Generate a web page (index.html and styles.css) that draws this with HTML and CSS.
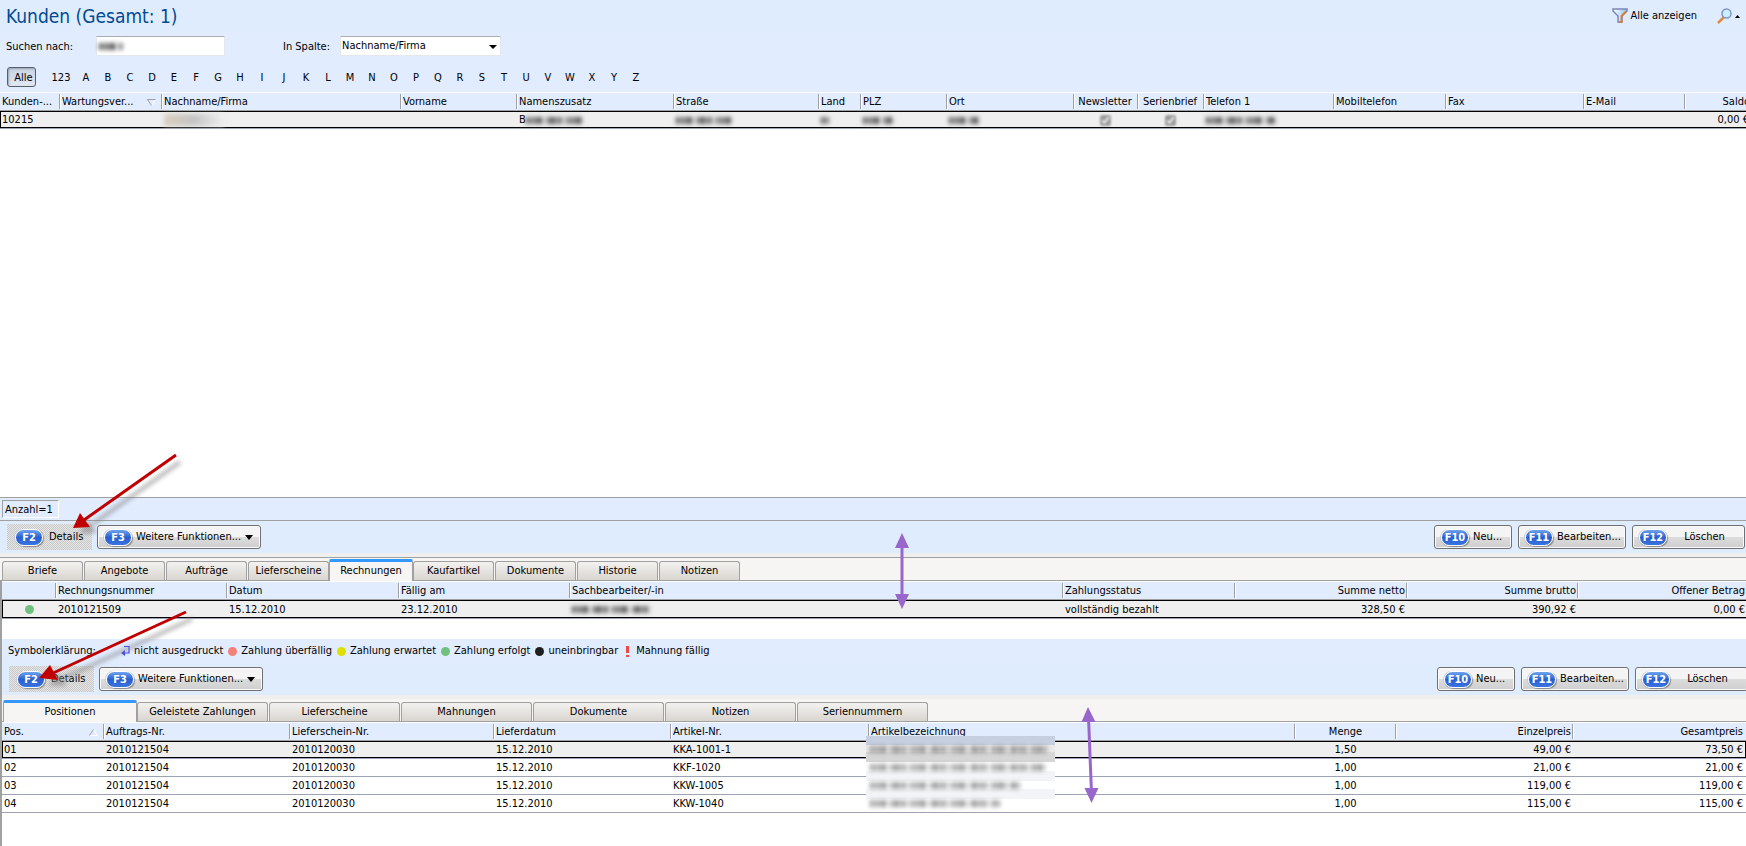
FILE: index.html
```html
<!DOCTYPE html>
<html lang="de">
<head>
<meta charset="utf-8">
<title>Kunden</title>
<link rel="stylesheet" href="styles.css">
</head>
<body>
<header class="titlebar">
  <h1>Kunden (Gesamt: 1)</h1>
  <button class="link-btn" type="button">
    <svg width="16" height="15" viewBox="0 0 16 15"><defs><linearGradient id="fg" x1="0" x2="1"><stop offset="0" stop-color="#fff"/><stop offset="1" stop-color="#8cc4ee"/></linearGradient></defs><path d="M1 1h14v2l-5 5v6H6V8L1 3z" fill="url(#fg)" stroke="#7c86b8" stroke-width="1.5"/><path d="M14 3.500 9.500 8v6H7" fill="none" stroke="#e07a28" stroke-width="1.800"/></svg>
    Alle anzeigen</button>
  <button class="link-btn find" type="button" aria-label="Suche">
    <svg width="24" height="16" viewBox="0 0 24 16"><path d="m1 15 6-6" stroke="#e08a3c" stroke-width="2.500"/><circle cx="9.500" cy="5.500" r="4.500" fill="#c9f0fc" stroke="#8295c8" stroke-width="1.500"/><path d="M18 10h5l-2.500-3z"/></svg>
  </button>
</header>

<section class="search">
  <form class="search-row">
    <label class="l-search" for="q">Suchen nach:</label>
    <span class="field"><input id="q" type="text"><i class="smudge s-q"></i></span>
    <label class="l-col" for="col">In Spalte:</label>
    <span class="combo"><select id="col"><option>Nachname/Firma</option></select><svg width="8" height="4" viewBox="0 0 8 4"><path d="M0 0h8L4 4z"/></svg></span>
  </form>
  <nav class="alpha">
    <button class="all" type="button">Alle</button><button class="num" type="button">123</button><button type="button">A</button><button type="button">B</button><button type="button">C</button><button type="button">D</button><button type="button">E</button><button type="button">F</button><button type="button">G</button><button type="button">H</button><button type="button">I</button><button type="button">J</button><button type="button">K</button><button type="button">L</button><button type="button">M</button><button type="button">N</button><button type="button">O</button><button type="button">P</button><button type="button">Q</button><button type="button">R</button><button type="button">S</button><button type="button">T</button><button type="button">U</button><button type="button">V</button><button type="button">W</button><button type="button">X</button><button type="button">Y</button><button type="button">Z</button>
  </nav>
</section>

<main class="customers">
  <table class="grid wide">
    <colgroup><col class="w61"><col class="w102"><col><col class="w116"><col class="w157"><col class="w145"><col class="w42"><col class="w86"><col class="w127"><col class="w64"><col class="w66"><col class="w130"><col class="w112"><col class="w138"><col class="w101"><col class="w64"></colgroup>
    <thead><tr><th>Kunden-...</th><th><span class="sort">Wartungsver...<svg width="9" height="7" viewBox="0 0 9 7"><path d="M8.500.500 4.500 6.500" stroke="#fff"/><path d="M8.500.500h-8l4 6" fill="none" stroke="#a0a0a0"/></svg></span></th><th>Nachname/Firma</th><th>Vorname</th><th>Namenszusatz</th><th>Straße</th><th>Land</th><th>PLZ</th><th>Ort</th><th class="c">Newsletter</th><th class="c">Serienbrief</th><th>Telefon 1</th><th>Mobiltelefon</th><th>Fax</th><th>E-Mail</th><th class="r">Saldo</th></tr></thead>
    <tbody><tr class="sel"><td>10215</td><td></td><td><i class="smudge s-name"></i></td><td></td><td>B<i class="smudge w60"></i></td><td><i class="smudge w55"></i></td><td><i class="smudge w8"></i></td><td><i class="smudge w30"></i></td><td><i class="smudge w30"></i></td><td class="c"><input class="soft" type="checkbox" checked aria-label="Newsletter"></td><td class="c"><input class="soft" type="checkbox" checked aria-label="Serienbrief"></td><td><i class="smudge w70"></i></td><td></td><td></td><td></td><td class="r">0,00 €</td></tr></tbody>
  </table>
</main>

<div class="status"><span>Anzahl=1</span></div>

<div class="toolbar">
  <button class="btn on" type="button"><b class="key">F2</b>Details</button>
  <button class="btn more" type="button"><b class="key">F3</b>Weitere Funktionen...<svg width="8" height="5" viewBox="0 0 8 5"><path d="M0 0h8L4 5z"/></svg></button>
  <span class="grow"></span>
  <button class="btn new" type="button"><b class="key">F10</b>Neu...</button>
  <button class="btn edit" type="button"><b class="key">F11</b>Bearbeiten...</button>
  <button class="btn del" type="button"><b class="key">F12</b><span>Löschen</span></button>
  <svg class="mark red-1" width="130" height="90" viewBox="0 0 130 90"><g class="shade"><path d="M113 10 26 72" stroke="#888" stroke-width="4"/><path d="m12 82 9-15 9 14z" fill="#888"/></g><path d="M109 3 17 68" stroke="#c00000" stroke-width="3"/><path d="m6 76 7-15 10 14z" fill="#c00000"/></svg>
  <svg class="mark violet-1" width="14" height="76" viewBox="0 0 14 76"><path d="M7 10v56" stroke="#9966cc" stroke-width="3"/><path d="m7 0 7 15H0zM7 76l7-15H0z" fill="#9966cc"/></svg>
</div>
<div class="strip"></div>

<section class="detail">
  <div class="tabs ruled">
    <button type="button">Briefe</button><button type="button">Angebote</button><button type="button">Aufträge</button><button type="button">Lieferscheine</button><button class="active" type="button">Rechnungen</button><button type="button">Kaufartikel</button><button type="button">Dokumente</button><button type="button">Historie</button><button type="button">Notizen</button>
  </div>
  <table class="grid lined wide-2">
    <colgroup><col class="w55"><col class="w171"><col class="w172"><col class="w171"><col><col class="w172"><col class="w172"><col class="w171"><col class="w169"></colgroup>
    <thead><tr><th></th><th>Rechnungsnummer</th><th>Datum</th><th>Fällig am</th><th>Sachbearbeiter/-in</th><th>Zahlungsstatus</th><th class="r">Summe netto</th><th class="r">Summe brutto</th><th class="r">Offener Betrag</th></tr></thead>
    <tbody><tr class="sel"><td class="c"><i class="dot green"></i></td><td>2010121509</td><td>15.12.2010</td><td>23.12.2010</td><td><i class="smudge w80"></i></td><td>vollständig bezahlt</td><td class="r">328,50 €</td><td class="r">390,92 €</td><td class="r">0,00 €</td></tr></tbody>
  </table>

  <div class="legend">
    <span class="l-title">Symbolerklärung:</span>
    <span class="item"><svg width="9" height="10" viewBox="0 0 9 10"><path d="M3 .500h5V7H3" fill="none" stroke="#4040f0" stroke-width="1.200"/><path d="M0 7l4-3v6z" fill="#4040f0"/></svg>nicht ausgedruckt</span>
    <span class="item"><i class="dot red"></i>Zahlung überfällig</span>
    <span class="item"><i class="dot yellow"></i>Zahlung erwartet</span>
    <span class="item"><i class="dot green"></i>Zahlung erfolgt</span>
    <span class="item"><i class="dot black"></i>uneinbringbar</span>
    <span class="item"><svg width="9" height="11" viewBox="0 0 9 11"><path d="M3 0h3v7H3zM3 9h3v2H3z" fill="#f04848"/></svg>Mahnung fällig</span>
  </div>

  <div class="toolbar inner">
    <button class="btn on" type="button"><b class="key">F2</b>Details</button>
    <button class="btn more" type="button"><b class="key">F3</b>Weitere Funktionen...<svg width="8" height="5" viewBox="0 0 8 5"><path d="M0 0h8L4 5z"/></svg></button>
    <span class="grow"></span>
    <button class="btn new" type="button"><b class="key">F10</b>Neu...</button>
    <button class="btn edit" type="button"><b class="key">F11</b>Bearbeiten...</button>
    <button class="btn del" type="button"><b class="key">F12</b><span>Löschen</span></button>
    <svg class="mark red-2" width="170" height="84" viewBox="0 0 170 84"><g class="shade"><path d="m157 10-128 59" stroke="#888" stroke-width="4"/><path d="m13 77 11-13 8 13z" fill="#888"/></g><path d="M151 3 16 65" stroke="#c00000" stroke-width="3"/><path d="m4 69 11-13 8 15z" fill="#c00000"/></svg>
  </div>
  <div class="strip"></div>

  <div class="tabs big">
    <button class="active" type="button">Positionen</button><button type="button">Geleistete Zahlungen</button><button type="button">Lieferscheine</button><button type="button">Mahnungen</button><button type="button">Dokumente</button><button type="button">Notizen</button><button type="button">Seriennummern</button>
    <svg class="mark violet-2" width="18" height="96" viewBox="0 0 18 96"><path d="m7.500 10 3 76" stroke="#9966cc" stroke-width="3"/><path d="m7 0 7.500 15H.500zM10.500 96l7-15h-14z" fill="#9966cc"/></svg>
  </div>
  <table class="grid lined items">
    <colgroup><col class="w103"><col class="w186"><col class="w204"><col class="w177"><col class="w198"><col><col class="w101"><col class="w177"><col class="w172"></colgroup>
    <thead><tr><th><span class="sort">Pos.<svg width="9" height="7" viewBox="0 0 9 7"><path d="M4.500.500l4 6h-8" fill="none" stroke="#fff"/><path d="m.500 6.500 4-6" stroke="#a0a0a0"/></svg></span></th><th>Auftrags-Nr.</th><th>Lieferschein-Nr.</th><th>Lieferdatum</th><th>Artikel-Nr.</th><th class="host">Artikelbezeichnung<span class="veil"><i class="smudge w180"></i><i class="smudge w175"></i><i class="smudge w150"></i><i class="smudge w130"></i></span></th><th class="c">Menge</th><th class="r">Einzelpreis</th><th class="r">Gesamtpreis</th></tr></thead>
    <tbody>
      <tr class="sel"><td>01</td><td>2010121504</td><td>2010120030</td><td>15.12.2010</td><td>KKA-1001-1</td><td></td><td class="c">1,50</td><td class="r">49,00 €</td><td class="r">73,50 €</td></tr>
      <tr><td>02</td><td>2010121504</td><td>2010120030</td><td>15.12.2010</td><td>KKF-1020</td><td></td><td class="c">1,00</td><td class="r">21,00 €</td><td class="r">21,00 €</td></tr>
      <tr><td>03</td><td>2010121504</td><td>2010120030</td><td>15.12.2010</td><td>KKW-1005</td><td></td><td class="c">1,00</td><td class="r">119,00 €</td><td class="r">119,00 €</td></tr>
      <tr><td>04</td><td>2010121504</td><td>2010120030</td><td>15.12.2010</td><td>KKW-1040</td><td></td><td class="c">1,00</td><td class="r">115,00 €</td><td class="r">115,00 €</td></tr>
    </tbody>
  </table>
</section>
</body>
</html>
```
FILE: styles.css
```css
* { box-sizing: border-box; }
body {
  margin: 0;
  min-height: 100vh;
  display: flex;
  flex-direction: column;
  overflow: hidden;
  background: #fff;
  color: #000;
  font: 11px/14px Tahoma, "DejaVu Sans Condensed", "Noto Sans", sans-serif;
}
button, input, select { font: inherit; color: inherit; margin: 0; }
button { padding: 0; border: 0; background: none; }
svg { display: block; flex: none; }

/* Title and search */
.titlebar {
  display: flex;
  align-items: center;
  height: 31px;
  padding: 0 5px 0 6px;
  background: #dfecfe;
}
h1 {
  margin: 0;
  flex: 1;
  font-size: 19px;
  line-height: 22px;
  font-weight: normal;
  color: #004a93;
}
.link-btn { display: flex; align-items: center; gap: 2px; }
.find { margin-left: 20px; }
.search { height: 61px; padding: 5px 7px; background: #e1ecff; }
.search-row { display: flex; align-items: center; height: 20px; margin-left: -1px; }
.search-row label { padding-top: 1px; }
.l-search { width: 90px; }
.l-col { width: 57px; margin-left: 58px; }
.field, .combo { position: relative; height: 20px; }
.field { width: 129px; }
.combo { width: 161px; }
.field input, .combo select {
  display: block;
  width: 100%;
  height: 20px;
  padding: 0 1px;
  border: 1px solid #e3e7ee;
  border-top-color: #abadb3;
  border-radius: 1px;
  background: #fff;
  appearance: none;
}
.combo svg { position: absolute; right: 4px; top: 9px; }
.alpha { display: flex; height: 20px; margin-top: 11px; }
.alpha button { width: 22px; padding-top: 1px; }
.alpha .all {
  width: 29px;
  padding-left: 4px;
  border: 1px solid #55606f;
  border-radius: 3px;
  background: linear-gradient(#c9d3e2, #e1e8f3);
  box-shadow: inset 1px 1px 2px #98a2b0;
}
.alpha .num { width: 50px; margin-right: -11px; }

/* Data grids */
.customers { flex: 1; overflow: hidden; }
.grid { width: 100%; table-layout: fixed; border-collapse: separate; border-spacing: 0; }
.wide { width: calc(100% + 4px); }
.wide-2 { width: calc(100% + 2px); }
.grid th, .grid td { padding: 1px 1px 0; text-align: left; white-space: nowrap; font-weight: normal; line-height: 14px; }
.grid th:first-child, .grid td:first-child { padding-left: 2px; }
.grid th {
  height: 19px;
  border-top: 1px solid #fff;
  border-bottom: 1px solid #a0a0a0;
  background: linear-gradient(90deg, #a0a0a0 1px, #fff 1px) right center / 2px 15px no-repeat #e1ecff;
}
.grid th:last-child { background: #e1ecff; }
.grid td { height: 18px; border-bottom: 1px solid #9ba3b5; }
.wide-2 td { height: 19px; }
.grid .sel td { background: #efefef; box-shadow: inset 0 1px #000, inset 0 -1px #000; }
.grid .sel td:first-child { box-shadow: inset 0 1px #000, inset 0 -1px #000, inset 1px 0 #000; }
.items .sel td:last-child { box-shadow: inset 0 1px #000, inset 0 -1px #000, inset -1px 0 #000; }
.grid .c { text-align: center; padding-right: 3px; }
.wide .c { padding-right: 5px; }
.grid .r { text-align: right; padding-right: 3px; }
.wide th:last-child.r { padding-right: 0; }
.wide td:last-child.r { padding-right: 1px; }
.sort { display: flex; align-items: center; justify-content: space-between; padding-right: 6px; }
.lined { border-top: 1px solid #a0a0a0; }
.w42 { width: 42px; } .w55 { width: 55px; } .w61 { width: 61px; } .w64 { width: 64px; }
.w66 { width: 66px; } .w86 { width: 86px; } .w101 { width: 101px; } .w102 { width: 102px; }
.w103 { width: 103px; } .w112 { width: 112px; } .w116 { width: 116px; } .w127 { width: 127px; }
.w138 { width: 138px; } .w145 { width: 145px; } .w157 { width: 157px; }
.w169 { width: 169px; } .w171 { width: 171px; } .w172 { width: 172px; } .w177 { width: 177px; }
.w186 { width: 186px; } .w198 { width: 198px; } .w204 { width: 204px; }
col.w130 { width: 130px; }

/* Obscured values */
.smudge {
  display: inline-block;
  height: 7px;
  vertical-align: middle;
  filter: blur(2px);
  background:
    repeating-linear-gradient(90deg, transparent 0 17px, #efefef 17px 20px),
    repeating-linear-gradient(90deg, #555 0 3px, #bbb 3px 5px, #777 5px 9px, #999 9px 11px, #666 11px 13px);
}
.s-q { position: absolute; left: 3px; top: 7px; width: 24px; }
.s-name { width: 60px; height: 12px; background: linear-gradient(90deg, #d8cfc0, #c4c4c4 50%, #efefef); }
.smudge.w8 { width: 8px; } .smudge.w30 { width: 30px; } .smudge.w55 { width: 55px; }
.smudge.w60 { width: 60px; } .smudge.w70 { width: 70px; } .smudge.w80 { width: 80px; }
.smudge.w180 { width: 180px; } .smudge.w175 { width: 175px; } .smudge.w150 { width: 150px; } .smudge.w130 { width: 130px; }
.soft { width: 11px; height: 11px; vertical-align: middle; filter: blur(1px) grayscale(1); opacity: .6; }
.host { position: relative; }
.veil {
  position: absolute;
  left: -4px;
  top: 13px;
  width: 189px;
  height: 75px;
  padding: 10px 4px 0;
  display: flex;
  flex-direction: column;
  gap: 11px;
  background: linear-gradient(#c5cfdf 0 9px, #e8e8e8 9px 16px, #d6d6d6 16px 26px, #fff 26px 35px, #f3f4f7 35px 45px, #fff 45px 53px, #f3f4f7 53px 63px, #fff 63px);
}
.veil .smudge { opacity: .6; flex: none; }

/* Status and toolbars */
.status {
  display: flex;
  height: 24px;
  padding: 2px;
  border-top: 1px solid #a0a0a0;
  border-bottom: 1px solid #a0a0a0;
  background: #e1ecff;
}
.status span {
  width: 57px;
  padding: 2px 2px 0;
  border: 1px solid #fff;
  border-top-color: #a0a0a0;
  border-left-color: #a0a0a0;
}
.toolbar {
  position: relative;
  display: flex;
  align-items: center;
  height: 32px;
  padding: 0 1px 0 7px;
  background: #dfecfe;
}
.inner { margin-right: -3px; }
.grow { flex: 1; }
.btn {
  display: flex;
  align-items: center;
  height: 24px;
  padding: 0 6px;
  gap: 4px;
  border: 1px solid #707070;
  border-radius: 3px;
  background: linear-gradient(#f4f4f4 0 50%, #dcdcdc 50%, #cfcfcf);
  box-shadow: inset 0 0 0 1px #fafafa;
  white-space: nowrap;
}
.btn.on {
  width: 85px;
  height: 26px;
  padding: 0 8px;
  gap: 6px;
  border: 0;
  border-radius: 0;
  box-shadow: none;
  background: repeating-conic-gradient(#c8c8c8 0 25%, #e6e6e6 0 50%) 0 0 / 2px 2px;
}
.more { width: 164px; margin-left: 5px; }
.new { width: 78px; }
.edit { width: 108px; margin: 0 6px; }
.del { width: 113px; }
.del span { flex: 1; text-align: center; }
.key {
  width: 28px;
  height: 17px;
  border: 1px solid #fff;
  border-radius: 9px;
  background: linear-gradient(#6fa4ee, #2a5fd0 50%, #3a74e0);
  box-shadow: 1px 1px 1px #888, -1px 0 0 #c4cbd8;
  color: #fff;
  font-size: 11px;
  line-height: 15px;
  text-align: center;
  flex: none;
}
.strip { height: 4px; background: #efefef; }

/* Detail panel */
.detail { border-left: 2px solid #a0a0a0; padding-bottom: 33px; }
.tabs { position: relative; display: flex; align-items: flex-end; gap: 1px; height: 22px; padding-left: 1px; background: #f6f5f3; }
.ruled { height: 23px; margin-left: -2px; padding-left: 2px; border-top: 1px solid #a0a0a0; }
.tabs button {
  width: 81px;
  height: 19px;
  border: 1px solid #a0a0a0;
  border-bottom: 0;
  border-radius: 3px 3px 0 0;
  background: linear-gradient(#f3f2f0, #d9d5d0);
}
.tabs .active {
  width: 84px;
  height: 22px;
  margin: 0 -1px -1px;
  padding-bottom: 2px;
  border-top: 3px solid #3399ff;
  border-radius: 2px 2px 0 0;
  background: #f6f5f3;
}
.big button { width: 131px; }
.big .active { width: 134px; margin-left: 0; }
.legend { display: flex; align-items: center; height: 24px; margin-top: 20px; padding-left: 6px; gap: 5px; background: #e1ecff; }
.l-title { width: 108px; }
.item { display: flex; align-items: center; gap: 4px; }
.dot { display: inline-block; width: 9px; height: 9px; border-radius: 50%; vertical-align: middle; }
.green { background: #70c080; }
.red { background: #f48078; }
.yellow { background: #e0e000; }
.black { background: #202020; }

/* Annotation arrows */
.mark { position: absolute; z-index: 2; pointer-events: none; }
.shade { filter: blur(2px); opacity: .6; }
.red-1 { left: 67px; top: -69px; }
.violet-1 { left: 895px; top: 12px; }
.red-2 { left: 33px; top: -54px; }
.violet-2 { left: 1079px; top: 8px; }
```
